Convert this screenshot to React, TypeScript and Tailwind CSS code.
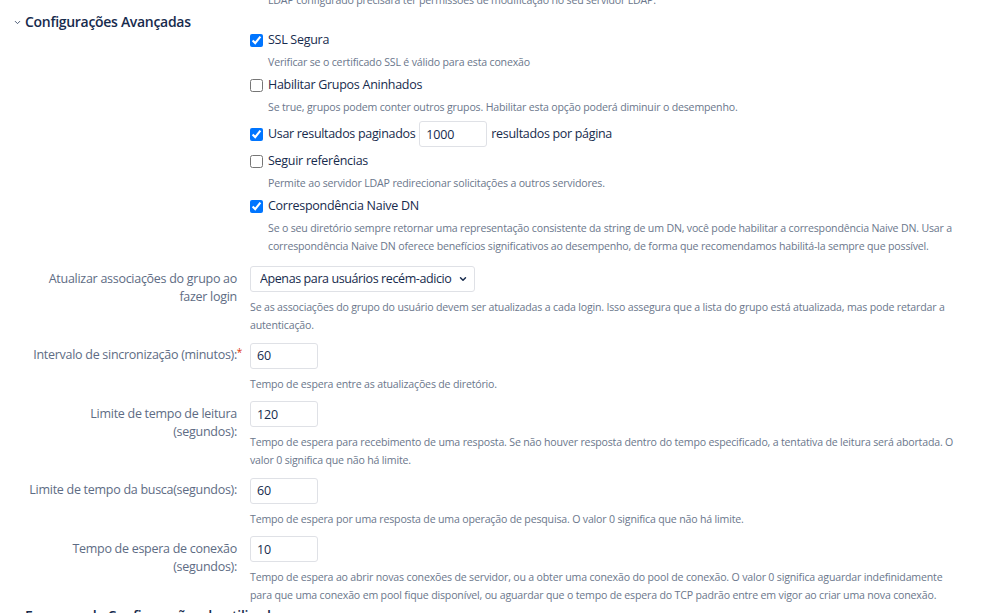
import { ChevronDown } from "lucide-react";

const font = { fontFamily: '"Open Sans", "Noto Sans", sans-serif' };

const Desc = ({ lines, className = "" }: { lines: string[]; className?: string }) => (
  <div className={`text-[10.6px] leading-[18px] tracking-[-0.18px] text-[#6b778c] ${className}`}>
    {lines.map((l, i) => (
      <div key={i} className="whitespace-nowrap">
        {l}
      </div>
    ))}
  </div>
);

const Check = ({ checked }: { checked?: boolean }) => (
  <input type="checkbox" defaultChecked={checked} className="m-0 h-[13px] w-[13px] shrink-0" />
);

const CheckRow = ({ label, checked, desc }: { label: string; checked?: boolean; desc?: string[] }) => (
  <div>
    <label className="flex h-[22px] items-center gap-[5px] text-[12.5px] tracking-[-0.28px] text-[#172b4d]">
      <Check checked={checked} />
      <span>{label}</span>
    </label>
    {desc && <Desc lines={desc} className="pl-[18px] pt-[2px] pb-[3px]" />}
  </div>
);

const TextBox = ({ value }: { value: string }) => (
  <input
    defaultValue={value}
    className="h-[26px] w-[68px] rounded-[3px] border border-[#dfe1e6] bg-white px-[6px] text-[12.5px] tracking-[-0.2px] text-[#172b4d] outline-none"
  />
);

const Field = ({
  label,
  required,
  control,
  desc,
}: {
  label: string[];
  required?: boolean;
  control: React.ReactNode;
  desc: string[];
}) => (
  <div className="mt-[8px] flex">
    <div className="w-[237px] shrink-0 pt-[4px] text-right text-[12.5px] leading-[18px] tracking-[-0.28px] text-[#5e6c84]">
      {label.map((l, i) => (
        <div key={i} className="relative whitespace-nowrap">
          {l}
          {required && i === label.length - 1 && (
            <span className="absolute -right-[5px] -top-[3px] text-[10px] text-[#de350b]">*</span>
          )}
        </div>
      ))}
    </div>
    <div className="ml-[13px]">
      {control}
      <Desc lines={desc} className="mt-[6px]" />
    </div>
  </div>
);

export default function App() {
  return (
    <div className="h-[613px] w-[998px] overflow-hidden bg-white" style={font}>
      <div className="-mt-[9px]">
        <Desc
          lines={["LDAP configurado precisará ter permissões de modificação no seu servidor LDAP."]}
          className="pl-[268px]"
        />
        <div className="mt-[2px] flex h-[20px] items-center pl-[13px] text-[14px] font-semibold tracking-[-0.3px] text-[#172b4d]">
          <ChevronDown size={9} strokeWidth={2.5} className="mr-[3px] mt-[2px] text-[#42526e]" />
          <span>Configurações Avançadas</span>
        </div>
        <div className="-mt-[2px] pl-[250px]">
          <CheckRow label="SSL Segura" checked desc={["Verificar se o certificado SSL é válido para esta conexão"]} />
          <CheckRow
            label="Habilitar Grupos Aninhados"
            desc={["Se true, grupos podem conter outros grupos. Habilitar esta opção poderá diminuir o desempenho."]}
          />
          <div className="mt-[2px] mb-[3px] flex h-[26px] items-center gap-[4px] text-[12.5px] tracking-[-0.32px] text-[#172b4d]">
            <Check checked />
            <span className="ml-[1px]">Usar resultados paginados</span>
            <TextBox value="1000" />
            <span>resultados por página</span>
          </div>
          <CheckRow
            label="Seguir referências"
            desc={["Permite ao servidor LDAP redirecionar solicitações a outros servidores."]}
          />
          <CheckRow
            label="Correspondência Naive DN"
            checked
            desc={[
              "Se o seu diretório sempre retornar uma representação consistente da string de um DN, você pode habilitar a correspondência Naive DN. Usar a",
              "correspondência Naive DN oferece benefícios significativos ao desempenho, de forma que recomendamos habilitá-la sempre que possível.",
            ]}
          />
        </div>
        <div className="mt-[2px]">
          <Field
            label={["Atualizar associações do grupo ao", "fazer login"]}
            control={
              <div className="flex h-[26px] w-[225px] items-center rounded-[3px] border border-[#dfe1e6] bg-white pl-[9px] pr-[6px] text-[12.5px] tracking-[-0.4px] text-[#172b4d]">
                <span className="min-w-0 flex-1 overflow-hidden whitespace-nowrap">
                  Apenas para usuários recém-adicionados
                </span>
                <ChevronDown size={10} strokeWidth={3.5} className="ml-[6px] shrink-0 text-[#172b4d]" />
              </div>
            }
            desc={[
              "Se as associações do grupo do usuário devem ser atualizadas a cada login. Isso assegura que a lista do grupo está atualizada, mas pode retardar a",
              "autenticação.",
            ]}
          />
          <Field
            label={["Intervalo de sincronização (minutos):"]}
            required
            control={<TextBox value="60" />}
            desc={["Tempo de espera entre as atualizações de diretório."]}
          />
          <Field
            label={["Limite de tempo de leitura", "(segundos):"]}
            control={<TextBox value="120" />}
            desc={[
              "Tempo de espera para recebimento de uma resposta. Se não houver resposta dentro do tempo especificado, a tentativa de leitura será abortada. O",
              "valor 0 significa que não há limite.",
            ]}
          />
          <Field
            label={["Limite de tempo da busca(segundos):"]}
            control={<TextBox value="60" />}
            desc={["Tempo de espera por uma resposta de uma operação de pesquisa. O valor 0 significa que não há limite."]}
          />
          <Field
            label={["Tempo de espera de conexão", "(segundos):"]}
            control={<TextBox value="10" />}
            desc={[
              "Tempo de espera ao abrir novas conexões de servidor, ou a obter uma conexão do pool de conexão. O valor 0 significa aguardar indefinidamente",
              "para que uma conexão em pool fique disponível, ou aguardar que o tempo de espera do TCP padrão entre em vigor ao criar uma nova conexão.",
            ]}
          />
        </div>
        <div className="mt-[2px] pl-[25px] text-[14px] font-semibold leading-[20px] tracking-[-0.3px] text-[#172b4d]">
          Esquema de Configurações do utilizador
        </div>
      </div>
    </div>
  );
}
